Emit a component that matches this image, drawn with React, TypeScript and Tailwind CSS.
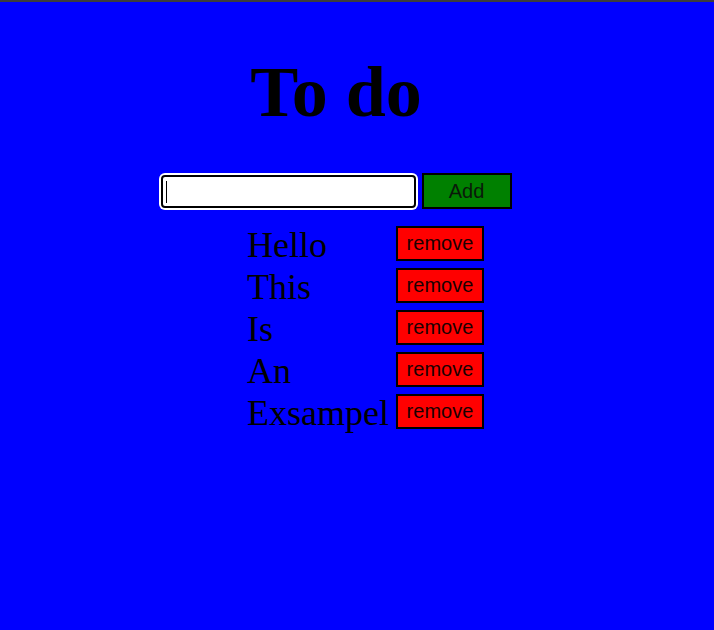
import React, {useState} from "react";

const startItems = ["Hello", "This", "Is", "An", "Exsampel"];

function App() {
  const [items, setItems] = useState<string[]>(startItems);
  const [text, setText] = useState("");

  const addItem = () => {
    if (!text.trim()) return;
    setItems([...items, text]);
    setText("");
  };

  return (
    <div className="min-h-[630px] bg-[#0000ff] font-['Liberation_Serif',serif] text-black">
      <div className="h-[2px] bg-[#3c3c3c]" />
      <div className="w-[672px]">
        <h1 className="mt-[54px] text-center text-[72px] leading-[72px] font-bold">To do</h1>

        <div className="mt-[45px] flex items-center justify-center gap-[6px]">
          <div className="relative">
            <input
              className="block h-[33px] w-[255px] rounded-[4px] border-2 border-black bg-white px-1 outline-none shadow-[0_0_0_2px_#ffffff]"
              value={text}
              onChange={(e) => setText(e.target.value)}
            />
            {text === "" && (
              <span className="absolute left-[5px] top-[6px] h-[22px] w-px bg-black" />
            )}
          </div>
          <button
            className="h-[36px] w-[90px] border-2 border-black bg-[#008000] font-['Liberation_Sans',Arial,sans-serif] text-[20px] text-[#0a1a0a]"
            onClick={addItem}
          >
            Add
          </button>
        </div>

        <ul className="mt-[13px] ml-[247px] grid grid-cols-[auto_auto] justify-start gap-x-[7px]">
          {items.map((item, i) => (
            <React.Fragment key={i}>
              <li className="h-[42px] text-[36px] leading-[46px]">{item}</li>
              <div className="flex h-[42px] items-center">
                <button
                  className="h-[35px] w-[88px] border-2 border-black bg-[#ff0000] font-['Liberation_Sans',Arial,sans-serif] text-[20px] text-[#1a0000]"
                  onClick={() => setItems(items.filter((_, j) => j !== i))}
                >
                  remove
                </button>
              </div>
            </React.Fragment>
          ))}
        </ul>
      </div>
    </div>
  );
}

export default App;
